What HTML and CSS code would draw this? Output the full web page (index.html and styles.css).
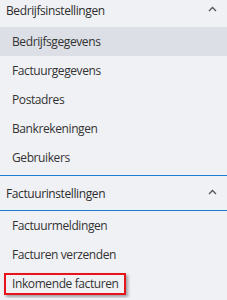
FILE: index.html
```html
<!DOCTYPE html>
<html>
<head>
<meta charset="utf-8">
<link rel="stylesheet" href="styles.css">
</head>
<body>
<div class="page">
  <section class="section">
    <div class="section-header">
      <span>Bedrijfsinstellingen</span>
      <svg class="chevron" width="9" height="6" viewBox="0 0 9 6"><polyline points="1,5 4.5,1.5 8,5" fill="none" stroke="#555" stroke-width="1.3"/></svg>
    </div>
    <ul class="items">
      <li class="item active">Bedrijfsgegevens</li>
      <li class="item">Factuurgegevens</li>
      <li class="item">Postadres</li>
      <li class="item">Bankrekeningen</li>
      <li class="item">Gebruikers</li>
    </ul>
  </section>
  <section class="section second">
    <div class="section-header bordered">
      <span>Factuurinstellingen</span>
      <svg class="chevron" width="9" height="6" viewBox="0 0 9 6"><polyline points="1,5 4.5,1.5 8,5" fill="none" stroke="#555" stroke-width="1.3"/></svg>
    </div>
    <ul class="items">
      <li class="item">Factuurmeldingen</li>
      <li class="item">Facturen verzenden</li>
      <li class="item"><span class="mark">Inkomende facturen</span></li>
    </ul>
  </section>
</div>
</body>
</html>
```

FILE: styles.css
```css
html, body {
  margin: 0;
  padding: 0;
  background: #f0f1f5;
}
body {
  font-family: "Open Sans", "Noto Sans", sans-serif;
  font-size: 12px;
  letter-spacing: -0.4px;
  color: #2d2d2d;
  overflow: hidden;
}
.page {
  margin-top: -7px;
}
.section-header {
  height: 34px;
  display: flex;
  align-items: center;
  justify-content: space-between;
  padding: 0 10px 0 6px;
  box-sizing: border-box;
}
.section-header.bordered {
  height: 36px;
  border-top: 1px solid #1f7bd2;
  border-bottom: 1px solid #1f7bd2;
}
.chevron {
  display: block;
  margin-top: -2px;
}
.items {
  list-style: none;
  margin: 0;
  padding: 0 0 3px 0;
}
.second .items {
  padding: 0;
}
.item {
  height: 29px;
  display: flex;
  align-items: center;
  padding-left: 12px;
  color: #333;
}
.item.active {
  background: #dcdfe5;
}
.mark {
  display: inline-block;
  margin-left: -8px;
  padding: 1px 5px 1px 6px;
  line-height: 16px;
  border: 2px solid #e8141c;
  box-shadow: 2px 2px 3px rgba(0, 0, 0, 0.35);
}
```
